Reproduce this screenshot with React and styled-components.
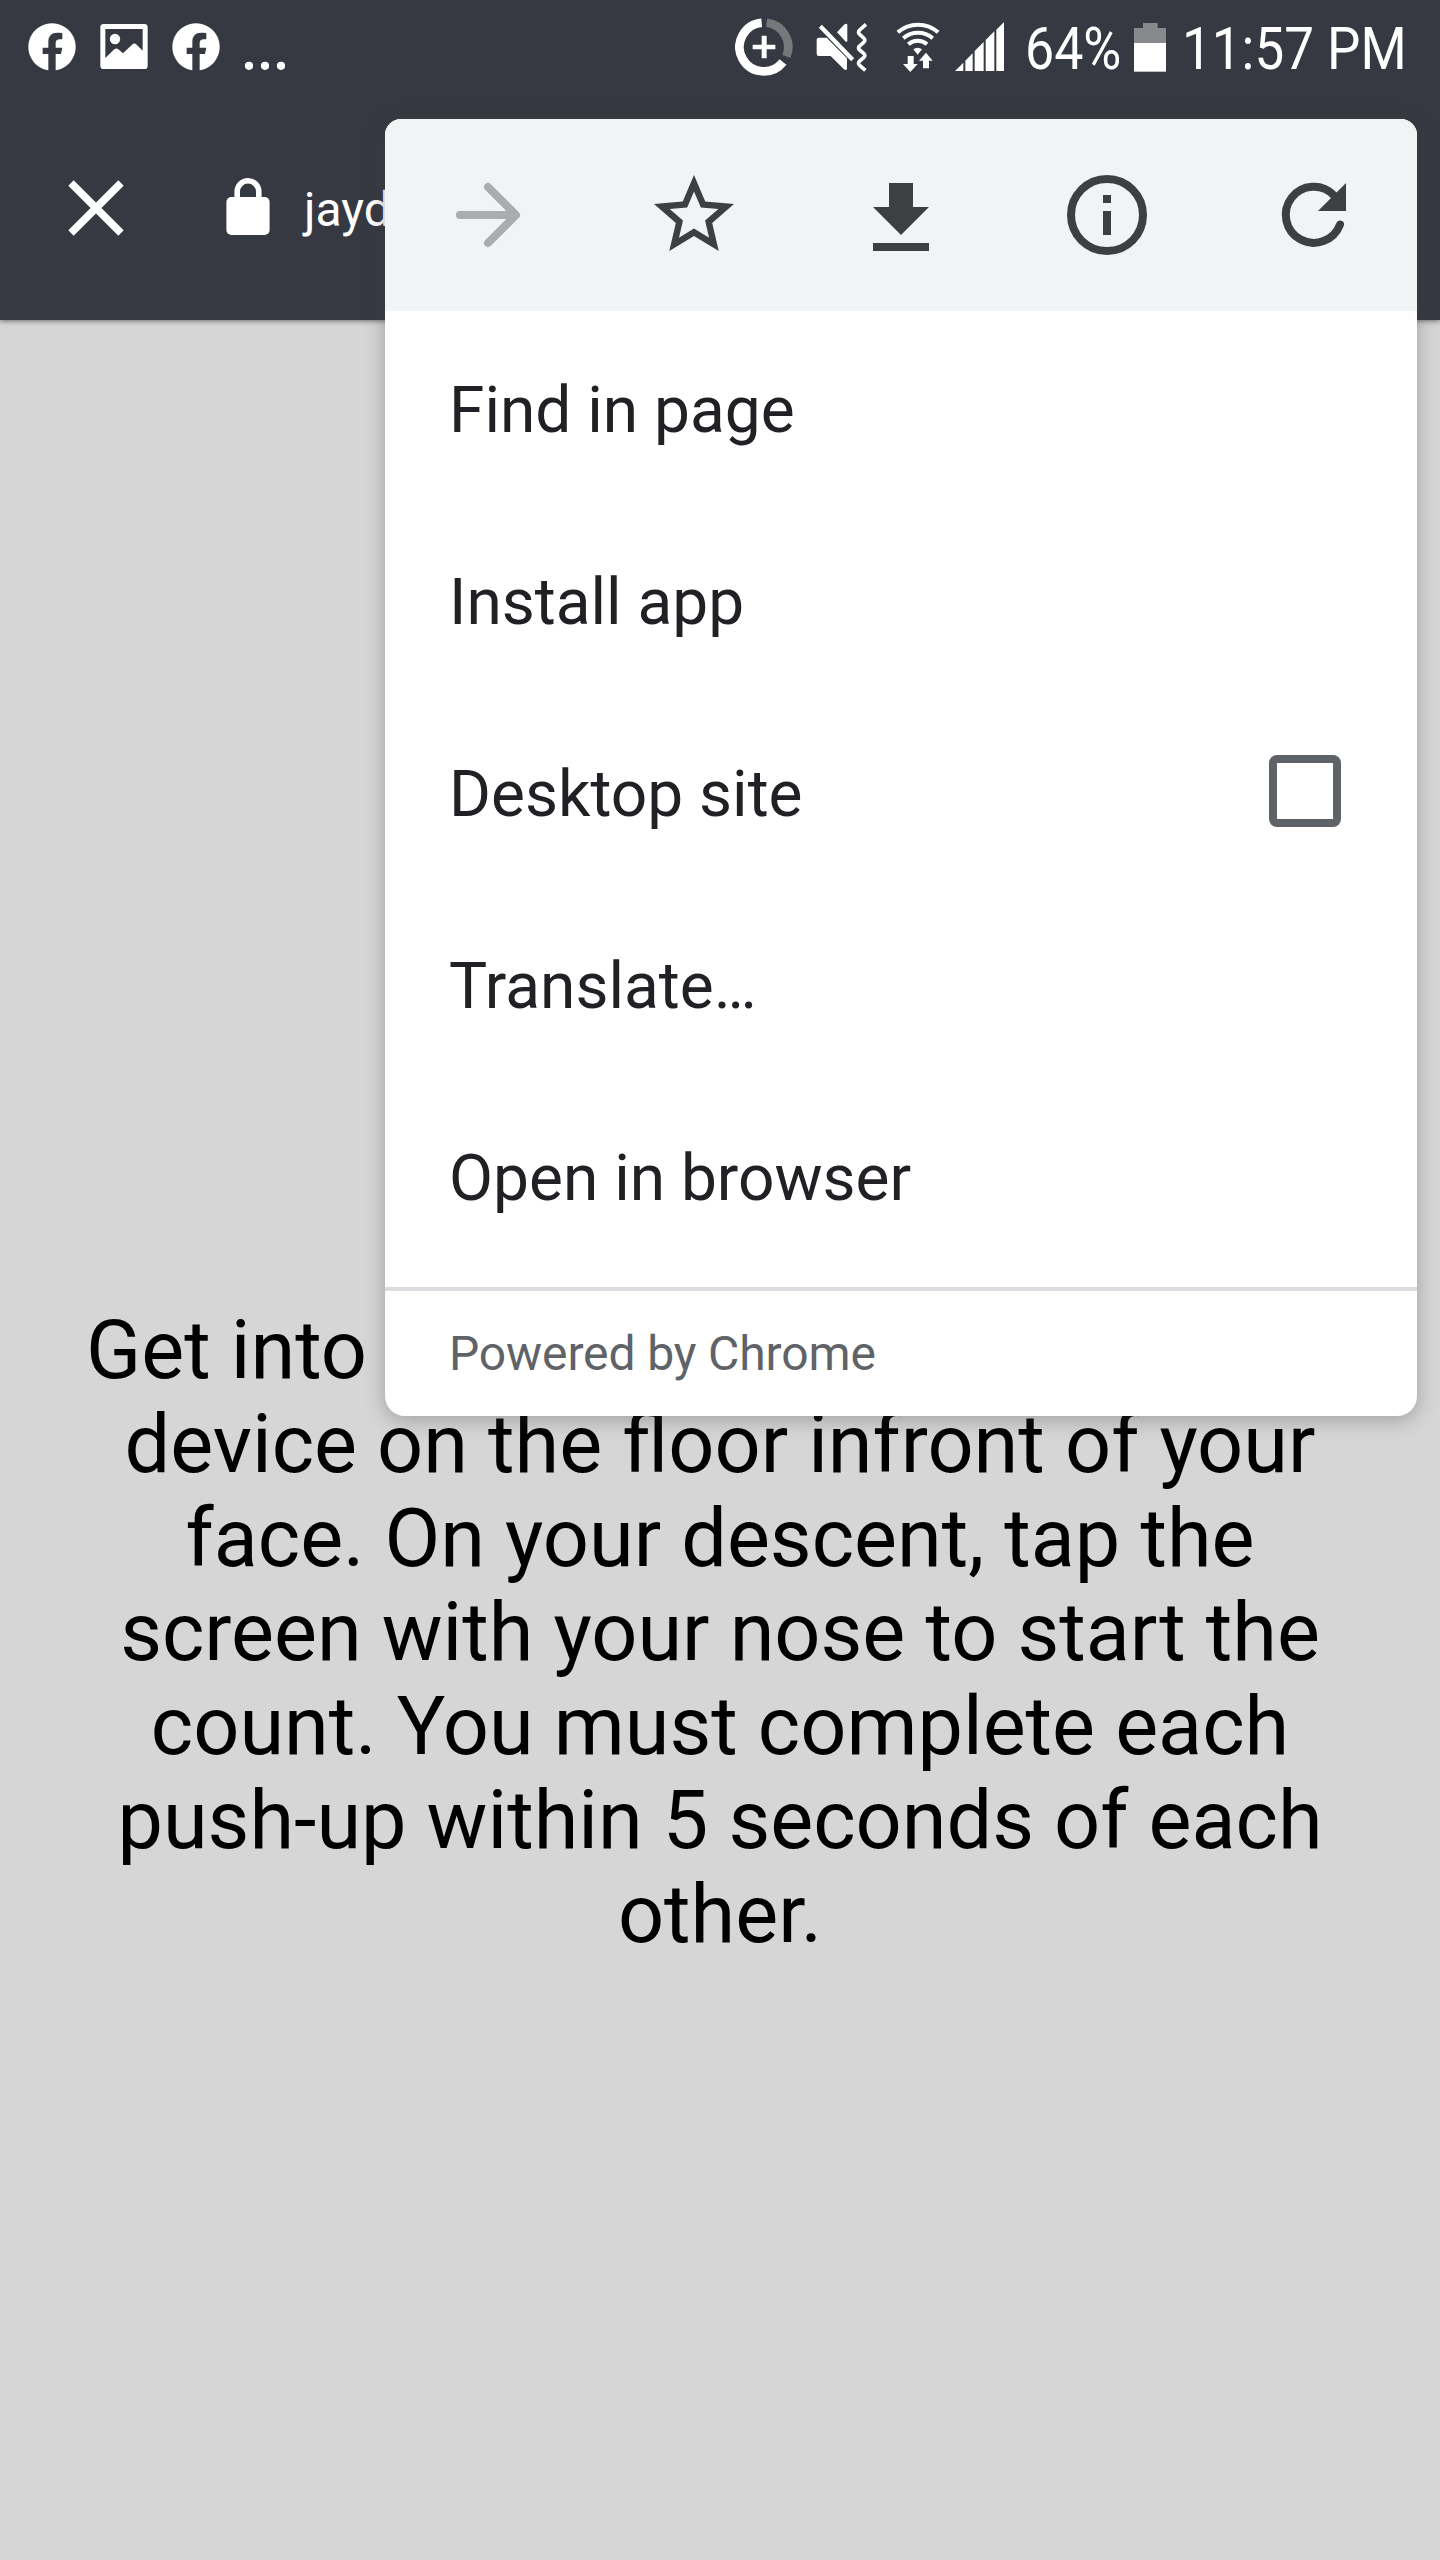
import React from "react";
import styled, { createGlobalStyle } from "styled-components";

const Global = createGlobalStyle`
  html, body { margin: 0; padding: 0; background: #d6d6d6; }
  * { box-sizing: border-box; }
`;

const Screen = styled.div`
  position: relative;
  width: 1440px;
  height: 2560px;
  overflow: hidden;
  display: flex;
  flex-direction: column;
  background: #d6d6d6;
  font-family: Roboto, "Liberation Sans", sans-serif;
`;

const Header = styled.header`
  flex: none;
  height: 320px;
  background: #373942;
  color: #fff;
  box-shadow: 0 1px 5px rgba(0, 0, 0, 0.5);
`;

const StatusBar = styled.div`
  display: flex;
  align-items: flex-start;
  height: 96px;
  padding: 0 35px 0 28px;
`;

const Glyph = styled.svg`
  display: block;
  flex: none;
  width: ${(p) => p.$w}px;
  height: ${(p) => p.$h}px;
  margin-left: ${(p) => p.$left || 0}px;
  margin-top: ${(p) => p.$top || 0}px;
`;

const Spacer = styled.div`
  flex: 1;
`;

const StatusText = styled.div`
  flex: none;
  width: ${(p) => p.$w}px;
  margin-left: ${(p) => p.$left}px;
  margin-top: 14px;
  font-size: 60px;
  line-height: 70px;
  white-space: nowrap;

  span {
    display: inline-block;
    transform: scaleX(${(p) => p.$squeeze});
    transform-origin: 0 50%;
  }
`;

const Toolbar = styled.div`
  display: flex;
  align-items: flex-start;
  height: 224px;
  padding-left: 66px;
`;

const Url = styled.div`
  margin: 86px 0 0 34px;
  font-size: 48px;
  line-height: 56px;
`;

const Content = styled.main`
  flex: 1;
  padding-top: 984px;
  text-align: center;
  color: #000;
  font-size: 81px;
  line-height: 94px;
  white-space: nowrap;
`;

const Line = styled.div`
  padding-left: ${(p) => p.$indent || 0}px;
  text-align: ${(p) => (p.$indent ? "left" : "center")};
`;

const Menu = styled.nav`
  position: absolute;
  left: 385px;
  top: 119px;
  width: 1032px;
  height: 1297px;
  display: flex;
  flex-direction: column;
  background: #fff;
  border-radius: 16px 16px 20px 20px;
  box-shadow: 0 4px 20px rgba(56, 61, 56, 0.36);
`;

const IconRow = styled.div`
  flex: none;
  display: grid;
  grid-template-columns: 206px 206px 207px 206px 207px;
  place-items: center;
  height: 192px;
  background: #f1f3f5;
  border-radius: 16px 16px 0 0;
`;

const ActionIcon = styled.svg`
  display: block;
  width: 96px;
  height: 96px;
  color: ${(p) => (p.$disabled ? "#a9adb0" : "#3c4043")};
`;

const Items = styled.div`
  flex: none;
  height: 976px;
`;

const Item = styled.div`
  display: flex;
  align-items: center;
  justify-content: space-between;
  height: 192px;
  padding: 0 76px 0 64px;
  color: #202124;
  font-size: 64px;
  line-height: 76px;
`;

const Label = styled.span`
  padding-top: 8px;
`;

const Checkbox = styled.span`
  width: 72px;
  height: 72px;
  border: 8px solid #5f6368;
  border-radius: 8px;
`;

const Footer = styled.div`
  flex: 1;
  display: flex;
  align-items: center;
  padding-left: 64px;
  border-top: 4px solid #dadce0;
  color: #5f6368;
  font-size: 48px;
  line-height: 56px;
  letter-spacing: -0.12px;
`;

function FacebookIcon({ left }) {
  return (
    <Glyph $w={48} $h={48} $left={left} $top={23} viewBox="0 0 144 144">
      <path
        fill="#fff"
        d="M61 142A71 71 0 1 1 83 142V93h16l4-19H83V61c0-9 4-12 12-12h8V30c-5-1-9-1-15-1-18 0-27 10-27 27v18H44v19h17z"
      />
    </Glyph>
  );
}

function PictureIcon() {
  return (
    <Glyph $w={48} $h={45} $left={24} $top={24} viewBox="0 0 144 135">
      <path
        fill="#fff"
        fillRule="evenodd"
        d="M11 0h122q10 0 10 10v115q0 10-10 10H11q-10 0-10-10V10Q1 0 11 0zM16 15v87l27-26q6-5 12 0l14 12 27-26q7-7 14 0l18 18V15z"
      />
      <circle cx="45" cy="45" r="15.5" fill="#fff" />
    </Glyph>
  );
}

export default function App() {
  return (
    <>
      <Global />
      <Screen>
        <Header>
          <StatusBar>
            <FacebookIcon left={0} />
            <PictureIcon />
            <FacebookIcon left={24} />
            <Glyph $w={42} $h={10} $left={24} $top={61} viewBox="0 0 42 10">
              <g fill="#fff">
                <circle cx="5" cy="4.8" r="4.1" />
                <circle cx="21" cy="4.8" r="4.1" />
                <circle cx="37" cy="4.8" r="4.1" />
              </g>
            </Glyph>
            <Spacer />
            <Glyph $w={58} $h={60} $top={17} viewBox="102 51 174 180">
              <g fill="none" strokeWidth="26">
                <path stroke="#77787c" d="M197 68.4A73 73 0 0 1 256 169" />
                <path stroke="#fff" d="M182 68.3A73 73 0 1 0 246 186" />
              </g>
              <path fill="#fff" d="M182 107h15v27h26v14h-26v27h-15v-27h-27v-14h27z" />
            </Glyph>
            <Glyph $w={52} $h={50} $left={23} $top={22} viewBox="346 66 156 150">
              <g fill="#fff">
                <path d="M354 113h24l61 62v32q-4 6-9 1l-40-40h-36q-6 0-6-6v-43q0-6 6-6z" />
                <path d="M409 97l21-23q8-6 10 0v50q-3 3-6 0z" />
              </g>
              <path stroke="#373942" strokeWidth="8" d="M368 73l99 99" />
              <path stroke="#fff" strokeWidth="13" d="M359 79l97 100" />
              <path
                fill="none"
                stroke="#fff"
                strokeWidth="11"
                strokeLinejoin="round"
                d="M496 73l-19 17q-7 7 0 13l12 11q7 7 0 13l-12 11q-7 6 0 12l12 10q7 7 0 13l-12 10q-7 7 0 13l17 15"
              />
            </Glyph>
            <Glyph $w={44} $h={52} $left={28} $top={21} viewBox="587 63 132 156">
              <g fill="none" stroke="#fff" strokeWidth="12">
                <path d="M592.5 97A91 91 0 0 1 713.5 97" />
                <path d="M609 115A67 67 0 0 1 697 115" />
                <path d="M625 133A42 42 0 0 1 681 133" transform="translate(-1 0)" />
              </g>
              <path fill="#fff" d="M639 148q13-9 26 0l-13 16z" />
              <path fill="#fff" d="M622 168h18v24h12l-22 24-22-24h14zM677 158l20 24h-11v23h-18v-23h-12z" />
            </Glyph>
            <Glyph $w={49} $h={49} $left={15} $top={22} viewBox="765 66 147 147">
              <path
                fill="#fff"
                d="M765 213l25-25v25zM796 213v-31l22-22v53zM824 213v-60l27-27v87zM857 213v-93l26-26v119zM889 213V89l23-23v147z"
              />
            </Glyph>
            <StatusText $w={95} $left={21} $squeeze={0.865}>
              <span>64%</span>
            </StatusText>
            <Glyph $w={32} $h={49} $left={14} $top={23} viewBox="0 0 96 147">
              <path fill="#88898c" d="M27 0h44v15h25v46H0V15h27z" />
              <path fill="#fff" d="M0 60h96v86H0z" />
            </Glyph>
            <StatusText $w={223} $left={16} $squeeze={0.883}>
              <span>11:57 PM</span>
            </StatusText>
          </StatusBar>
          <Toolbar>
            <Glyph $w={60} $h={60} $top={82} viewBox="0 0 60 60">
              <path stroke="#fff" strokeWidth="7.6" d="M5 5l50 50M55 5L5 55" />
            </Glyph>
            <Glyph $w={44} $h={58} $left={100} $top={82} viewBox="0 0 44 58">
              <path
                fill="none"
                stroke="#fff"
                strokeWidth="5.6"
                d="M11.2 21v-7.4a10.8 10.8 0 0 1 21.6 0V21"
              />
              <rect x="0.4" y="19" width="43.2" height="38" rx="5" fill="#fff" />
            </Glyph>
            <Url>jayd</Url>
          </Toolbar>
        </Header>

        <Content>
          <Line $indent={86}>Get into</Line>
          <Line>device on the floor infront of your</Line>
          <Line>face. On your descent, tap the</Line>
          <Line>screen with your nose to start the</Line>
          <Line>count. You must complete each</Line>
          <Line>push-up within 5 seconds of each</Line>
          <Line>other.</Line>
        </Content>

        <Menu>
          <IconRow>
            <ActionIcon $disabled viewBox="0 0 24 24">
              <path
                d="M5 12h13.2M12 5l7 7-7 7"
                fill="none"
                stroke="currentColor"
                strokeWidth="2"
                strokeLinecap="round"
                strokeLinejoin="round"
              />
            </ActionIcon>
            <ActionIcon viewBox="0 0 24 24">
              <path
                fill="currentColor"
                d="M22 9.24l-7.19-.62L12 2 9.19 8.63 2 9.24l5.46 4.73L5.82 21 12 17.27 18.18 21l-1.63-7.03L22 9.24zM12 15.4l-3.76 2.27 1-4.28-3.32-2.88 4.38-.38L12 6.1l1.71 4.04 4.38.38-3.32 2.88 1 4.28L12 15.4z"
              />
            </ActionIcon>
            <ActionIcon viewBox="0 0 24 24">
              <path fill="currentColor" d="M19 10h-4V4H9v6H5l7 7 7-7zM5 19v2h14v-2H5z" />
            </ActionIcon>
            <ActionIcon viewBox="0 0 24 24">
              <circle cx="12" cy="12" r="9" fill="none" stroke="currentColor" strokeWidth="2" />
              <path fill="currentColor" d="M11 7h2v2h-2zM11 11h2v6h-2z" />
            </ActionIcon>
            <ActionIcon viewBox="0 0 24 24">
              <path
                fill="none"
                stroke="currentColor"
                strokeWidth="2"
                strokeLinecap="round"
                d="M18.5 14.4A7 7 0 1 1 16.95 7.05"
              />
              <path fill="currentColor" d="M20 4v7h-7z" />
            </ActionIcon>
          </IconRow>
          <Items>
            <Item><Label>Find in page</Label></Item>
            <Item><Label>Install app</Label></Item>
            <Item>
              <Label>Desktop site</Label>
              <Checkbox />
            </Item>
            <Item><Label>Translate…</Label></Item>
            <Item><Label>Open in browser</Label></Item>
          </Items>
          <Footer>Powered by Chrome</Footer>
        </Menu>
      </Screen>
    </>
  );
}
